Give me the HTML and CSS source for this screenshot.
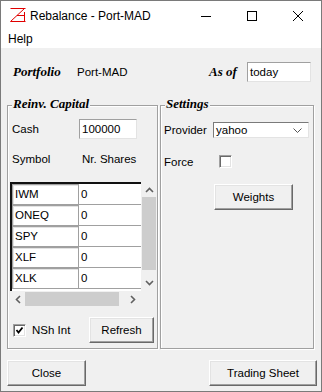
FILE: index.html
```html
<!DOCTYPE html>
<html lang="en">
<head>
    <meta charset="UTF-8">
    <title>Rebalance - Port-MAD</title>
    <link rel="stylesheet" href="styles.css">
</head>
<body>
    <div class="window">
        <div class="titlebar">
            <svg class="app-icon" width="16" height="16" viewBox="0 0 16 16">
                <polyline points="0.5,1.5 15.5,1.5" stroke="#e00000" fill="none"/>
                <polyline points="14.5,1.5 0.5,14.5 15.5,14.5" stroke="#e00000" fill="none"/>
                <polyline points="14.5,5 14.5,14.5" stroke="#e00000" fill="none"/>
                <polyline points="7,8.5 14.5,8.5" stroke="#e00000" fill="none"/>
            </svg>
            <span class="title">Rebalance - Port-MAD</span>
            <div class="controls">
                <span class="ctl">
                    <svg width="10" height="10" viewBox="0 0 10 10"><line x1="0" y1="5.5" x2="10" y2="5.5" stroke="#000"/></svg>
                </span>
                <span class="ctl">
                    <svg width="10" height="10" viewBox="0 0 10 10"><rect x="0.5" y="0.5" width="9" height="9" stroke="#000" fill="none"/></svg>
                </span>
                <span class="ctl">
                    <svg width="10" height="10" viewBox="0 0 10 10"><path d="M0 0 L10 10 M10 0 L0 10" stroke="#000" fill="none"/></svg>
                </span>
            </div>
        </div>
        <div class="menubar"><span class="menu-item">Help</span></div>

        <div class="client">
            <div class="top-row">
                <span class="script-label portfolio-label">Portfolio</span>
                <span class="portfolio-name">Port-MAD</span>
                <span class="script-label asof-label">As of</span>
                <span class="entry date-entry">today</span>
            </div>

            <div class="frames">
                <div class="frame capital">
                    <span class="frame-title">Reinv. Capital</span>
                    <div class="cash-row">
                        <span class="cash-label">Cash</span>
                        <span class="entry cash-entry">100000</span>
                    </div>
                    <div class="head-row">
                        <span class="head-symbol">Symbol</span>
                        <span>Nr. Shares</span>
                    </div>
                    <div class="table">
                        <div class="canvas">
                            <div class="row"><span class="sym">IWM</span><span class="num">0</span></div>
                            <div class="row"><span class="sym">ONEQ</span><span class="num">0</span></div>
                            <div class="row"><span class="sym">SPY</span><span class="num">0</span></div>
                            <div class="row"><span class="sym">XLF</span><span class="num">0</span></div>
                            <div class="row"><span class="sym">XLK</span><span class="num">0</span></div>
                        </div>
                        <div class="vscroll">
                            <span class="sb-btn up">
                                <svg width="9" height="6" viewBox="0 0 9 6"><polyline points="1,5 4.5,1.5 8,5" stroke="#606060" stroke-width="1.6" fill="none"/></svg>
                            </span>
                            <span class="vthumb"></span>
                            <span class="sb-track"></span>
                            <span class="sb-btn down">
                                <svg width="9" height="6" viewBox="0 0 9 6"><polyline points="1,1 4.5,4.5 8,1" stroke="#606060" stroke-width="1.6" fill="none"/></svg>
                            </span>
                        </div>
                        <div class="hscroll">
                            <span class="sb-btn left">
                                <svg width="6" height="9" viewBox="0 0 6 9"><polyline points="5,1 1.5,4.5 5,8" stroke="#606060" stroke-width="1.6" fill="none"/></svg>
                            </span>
                            <span class="hthumb"></span>
                            <span class="sb-track"></span>
                            <span class="sb-btn right">
                                <svg width="6" height="9" viewBox="0 0 6 9"><polyline points="1,1 4.5,4.5 1,8" stroke="#606060" stroke-width="1.6" fill="none"/></svg>
                            </span>
                        </div>
                        <div class="corner"></div>
                    </div>
                    <div class="check-row">
                        <span class="checkbox">
                            <svg width="9" height="9" viewBox="0 0 9 9"><polyline points="1.5,4 3.5,6.5 7.5,1.5" stroke="#000" stroke-width="1.8" fill="none"/></svg>
                        </span>
                        <span class="check-label">NSh Int</span>
                        <span class="button refresh">Refresh</span>
                    </div>
                </div>

                <div class="frame settings">
                    <span class="frame-title">Settings</span>
                    <div class="provider-row">
                        <span class="provider-label">Provider</span>
                        <span class="combo">
                            <span>yahoo</span>
                            <svg width="9" height="5" viewBox="0 0 9 5"><polyline points="0.5,0.5 4.5,4.5 8.5,0.5" stroke="#555" fill="none"/></svg>
                        </span>
                    </div>
                    <div class="force-row">
                        <span class="force-label">Force</span>
                        <span class="checkbox"></span>
                    </div>
                    <span class="button weights">Weights</span>
                </div>
            </div>

            <div class="actions">
                <span class="button close">Close</span>
                <span class="button trading">Trading Sheet</span>
            </div>
        </div>
    </div>
</body>
</html>
```

FILE: styles.css
```css
* {
    box-sizing: border-box;
}

body {
    margin: 0;
    padding: 0;
    background-color: #ffffff;
    font-family: 'Liberation Sans', Arial, sans-serif;
    font-size: 11.5px;
    color: #000;
}

.window {
    width: 322px;
    height: 392px;
    border: 1px solid #7a7a7a;
    background-color: #f0f0f0;
    display: flex;
    flex-direction: column;
}

/* title bar */
.titlebar {
    height: 29px;
    background-color: #ffffff;
    display: flex;
    align-items: center;
}

.app-icon {
    margin-left: 9px;
    margin-top: -2px;
}

.title {
    margin-left: 4px;
    flex: 1;
    font-size: 12px;
}

.controls {
    display: flex;
    height: 100%;
}

.ctl {
    width: 46px;
    display: flex;
    align-items: center;
    justify-content: center;
}

.ctl svg {
    display: block;
}

.menubar {
    height: 18px;
    background-color: #ffffff;
    padding-left: 7px;
    line-height: 18px;
    font-size: 12px;
}

/* main area */
.client {
    padding: 0 4px 0 6px;
}

.top-row {
    margin-top: 14px;
    height: 20px;
    display: flex;
    align-items: center;
    padding: 0 6px;
}

.script-label,
.frame-title {
    font-family: 'Liberation Serif', 'Times New Roman', serif;
    font-weight: bold;
    font-style: italic;
    font-size: 13px;
}

.portfolio-label {
    width: 64px;
}

.portfolio-name {
    flex: 1;
}

.asof-label {
    width: 38px;
}

.entry {
    height: 20px;
    background-color: #ffffff;
    border: 1px solid;
    border-color: #a0a0a0 #e3e3e3 #e3e3e3 #a0a0a0;
    padding-left: 2px;
    line-height: 18px;
}

.date-entry {
    width: 64px;
}

.frames {
    margin-top: 23px;
    height: 244px;
    display: flex;
}

.frame {
    border: 1px solid #a0a0a0;
    box-shadow: inset 1px 1px #ffffff, 1px 1px #ffffff;
    display: flex;
    flex-direction: column;
    align-items: flex-start;
}

.capital {
    width: 151px;
    margin-right: 2px;
}

.settings {
    width: 154px;
}

.frame-title {
    margin: -9px 0 0 4px;
    padding: 0 1px;
    line-height: 14px;
    background-color: #f0f0f0;
}

.cash-row {
    margin-top: 8px;
    height: 20px;
    display: flex;
    align-items: center;
}

.cash-label {
    width: 71px;
    padding-left: 4px;
}

.cash-entry {
    width: 58px;
}

.head-row {
    margin-top: 12px;
    height: 16px;
    display: flex;
    align-items: center;
}

.head-symbol {
    width: 74px;
    padding-left: 4px;
}

/* canvas with entries and scrollbars */
.table {
    margin: 15px 0 0 2px;
    display: grid;
    grid-template-columns: 131px 16px;
    grid-template-rows: 109px 16px;
}

.canvas {
    background-color: #ffffff;
    border-top: 2px solid #111;
    border-left: 2px solid #111;
    overflow: hidden;
}

.row {
    display: flex;
    height: 21px;
}

.sym {
    width: 67px;
    border: 1px solid #a0a0a0;
    box-shadow: inset 1px 1px #e3e3e3;
    padding-left: 2px;
    line-height: 19px;
}

.num {
    width: 62px;
    border-bottom: 1px solid #a0a0a0;
    padding-left: 2px;
    line-height: 20px;
}

.vscroll {
    display: flex;
    flex-direction: column;
}

.hscroll {
    display: flex;
}

.sb-btn {
    display: flex;
    align-items: center;
    justify-content: center;
}

.sb-btn svg {
    display: block;
}

.up {
    height: 15px;
}

.down {
    height: 17px;
}

.left {
    width: 15px;
}

.right {
    width: 17px;
}

.vthumb {
    height: 73px;
    margin: 0 1px;
    background-color: #cdcdcd;
}

.hthumb {
    width: 94px;
    margin: 1px 0;
    background-color: #cdcdcd;
}

.sb-track {
    flex: 1;
}

.check-row {
    margin-top: 10px;
    height: 26px;
    width: 100%;
    display: flex;
    align-items: center;
    padding: 0 3px 0 5px;
}

.checkbox {
    width: 13px;
    height: 13px;
    background-color: #ffffff;
    border: 1px solid;
    border-color: #a0a0a0 #ffffff #ffffff #a0a0a0;
    box-shadow: inset 1px 1px #696969, inset -1px -1px #e3e3e3;
    display: flex;
    align-items: center;
    justify-content: center;
}

.checkbox svg {
    display: block;
}

.check-label {
    flex: 1;
    margin-left: 6px;
}

.button {
    height: 26px;
    display: flex;
    align-items: center;
    justify-content: center;
    background-color: #f0f0f0;
    border: 1px solid;
    border-color: #ffffff #696969 #696969 #ffffff;
    box-shadow: inset -1px -1px #a0a0a0, inset 1px 1px #e3e3e3;
}

.refresh {
    width: 65px;
}

/* settings frame */
.provider-row {
    margin-top: 11px;
    height: 16px;
    display: flex;
    align-items: center;
}

.provider-label {
    width: 52px;
    padding-left: 3px;
}

.combo {
    width: 96px;
    height: 16px;
    background-color: #ffffff;
    border: 1px solid;
    border-color: #7a7a7a #e3e3e3 #e3e3e3 #7a7a7a;
    display: flex;
    align-items: center;
    justify-content: space-between;
    padding: 0 6px 0 2px;
}

.combo svg {
    display: block;
}

.force-row {
    margin-top: 17px;
    height: 13px;
    display: flex;
    align-items: center;
}

.force-label {
    width: 58px;
    padding-left: 3px;
}

.weights {
    margin: 16px 0 0 53px;
    width: 79px;
}

.actions {
    margin-top: 11px;
    display: flex;
    justify-content: space-between;
}

.close {
    width: 79px;
}

.trading {
    width: 108px;
}
```
